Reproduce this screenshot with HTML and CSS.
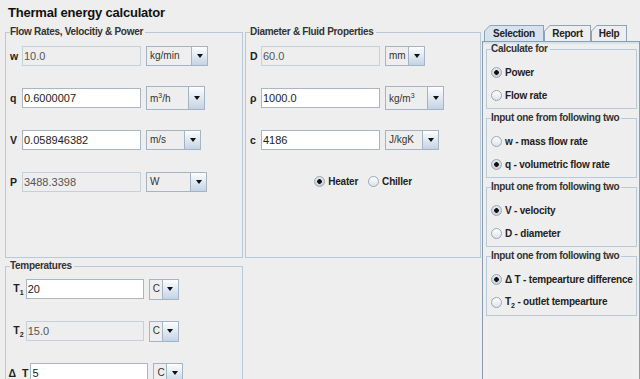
FILE: index.html
```html
<!DOCTYPE html>
<html lang="en">

<head>
  <meta charset="UTF-8">
  <meta name="viewport" content="width=device-width, initial-scale=1.0">
  <title>Thermal energy calculator</title>
  <link rel="stylesheet" href="styles.css">
</head>

<body>
  <h1 class="title">Thermal energy calculator</h1>
  <div class="main">
    <div class="forms">
      <fieldset class="panel panel-top">
        <legend>Flow Rates, Velocitiy &amp; Power</legend>
        <div class="rows">
          <div class="row">
            <span class="name">w</span>
            <input class="field" value="10.0" disabled>
            <div class="combo combo-kgmin"><span class="value">kg/min</span><span class="arrow"></span></div>
          </div>
          <div class="row">
            <span class="name">q</span>
            <input class="field" value="0.6000007">
            <div class="combo combo-tall combo-m3h"><span class="value">m<sup>3</sup>/h</span><span class="arrow"></span></div>
          </div>
          <div class="row">
            <span class="name">V</span>
            <input class="field" value="0.058946382">
            <div class="combo combo-ms"><span class="value">m/s</span><span class="arrow"></span></div>
          </div>
          <div class="row">
            <span class="name">P</span>
            <input class="field" value="3488.3398" disabled>
            <div class="combo combo-w"><span class="value">W</span><span class="arrow"></span></div>
          </div>
        </div>
      </fieldset>

      <fieldset class="panel panel-top panel-fluid">
        <legend>Diameter &amp; Fluid Properties</legend>
        <div class="rows">
          <div class="row">
            <span class="name">D</span>
            <input class="field" value="60.0" disabled>
            <div class="combo combo-mm"><span class="value">mm</span><span class="arrow"></span></div>
          </div>
          <div class="row">
            <span class="name">ρ</span>
            <input class="field" value="1000.0">
            <div class="combo combo-tall combo-kgm3"><span class="value">kg/m<sup>3</sup></span><span class="arrow"></span></div>
          </div>
          <div class="row">
            <span class="name">c</span>
            <input class="field" value="4186">
            <div class="combo combo-jkgk"><span class="value">J/kgK</span><span class="arrow"></span></div>
          </div>
          <div class="row row-center">
            <label class="option"><input type="radio" name="mode" checked> Heater</label>
            <label class="option"><input type="radio" name="mode"> Chiller</label>
          </div>
        </div>
      </fieldset>

      <fieldset class="panel panel-temps">
        <legend>Temperatures</legend>
        <div class="rows temp-rows">
          <div class="row">
            <span class="name">T<sub>1</sub></span>
            <input class="field" value="20">
            <div class="combo combo-c"><span class="value">C</span><span class="arrow"></span></div>
          </div>
          <div class="row">
            <span class="name">T<sub>2</sub></span>
            <input class="field" value="15.0" disabled>
            <div class="combo combo-c"><span class="value">C</span><span class="arrow"></span></div>
          </div>
          <div class="row">
            <span class="name name-delta">Δ T</span>
            <input class="field" value="5">
            <div class="combo combo-c"><span class="value">C</span><span class="arrow"></span></div>
          </div>
        </div>
      </fieldset>
    </div>

    <div class="tabpane">
      <div class="tabs">
        <div class="tab tab-active"><span>Selection</span></div>
        <div class="tab tab-report"><span>Report</span></div>
        <div class="tab tab-help"><span>Help</span></div>
      </div>
      <div class="tab-body">
        <fieldset class="group">
          <legend>Calculate for</legend>
          <label class="option"><input type="radio" name="calc" checked> Power</label>
          <label class="option"><input type="radio" name="calc"> Flow rate</label>
        </fieldset>
        <fieldset class="group">
          <legend>Input one from following two</legend>
          <label class="option"><input type="radio" name="flow"> w - mass flow rate</label>
          <label class="option"><input type="radio" name="flow" checked> q - volumetric flow rate</label>
        </fieldset>
        <fieldset class="group">
          <legend>Input one from following two</legend>
          <label class="option"><input type="radio" name="size" checked> V - velocity</label>
          <label class="option"><input type="radio" name="size"> D - diameter</label>
        </fieldset>
        <fieldset class="group">
          <legend>Input one from following two</legend>
          <label class="option"><input type="radio" name="temp" checked> Δ T - tempearture difference</label>
          <label class="option"><input type="radio" name="temp"> <span>T<sub>2</sub> - outlet tempearture</span></label>
        </fieldset>
      </div>
    </div>
  </div>
</body>

</html>
```

FILE: styles.css
```css
* {
  box-sizing: border-box;
}

body {
  margin: 0;
  height: 379px;
  overflow: hidden;
  background: #eeeeee;
  font-family: "Liberation Sans", Arial, sans-serif;
  color: #333;
}

.title {
  margin: 0;
  height: 25px;
  padding: 5px 0 0 8px;
  font-size: 13px;
  line-height: 16px;
  letter-spacing: -0.2px;
  color: #111;
}

.main {
  display: flex;
  align-items: flex-start;
}

.forms {
  display: grid;
  grid-template-columns: 238px 236px;
  column-gap: 2px;
  row-gap: 2px;
  width: 476px;
  margin: 1px 0 0 5px;
}

/* titled panels */

.panel,
.group {
  min-width: 0;
  margin: 0;
  padding: 0 4px;
  border: 1px solid #b8c9da;
}

.panel legend,
.group legend {
  padding: 0 2px 0 0;
  font-size: 10px;
  font-weight: bold;
  line-height: 12px;
  letter-spacing: -0.3px;
  color: #333;
}

.panel-top {
  padding-bottom: 58px;
}

.panel-temps {
  height: 160px;
}

.rows {
  display: flex;
  flex-direction: column;
  gap: 7px;
}

.row {
  display: flex;
  align-items: center;
  height: 35px;
}

.row-center {
  justify-content: center;
  gap: 10px;
}

.name {
  flex: none;
  width: 12px;
  font-size: 10.5px;
  font-weight: bold;
  white-space: nowrap;
  color: #222;
}

.panel-fluid .name {
  width: 11px;
}

.temp-rows {
  gap: 8px;
}

.temp-rows .row {
  width: 172px;
  height: 34px;
  justify-content: center;
}

.temp-rows .name {
  width: auto;
  margin-right: 2px;
}

.name-delta {
  word-spacing: 3px;
}

sub {
  font-size: 7px;
  vertical-align: sub;
}

sup {
  font-size: 7px;
  line-height: 0;
  vertical-align: 4px;
}

/* text fields */

.field {
  flex: none;
  width: 119px;
  height: 20px;
  margin: 0;
  padding: 0 1px;
  border: 1px solid #a9b6c4;
  background: #ffffff;
  font-family: "Liberation Sans", Arial, sans-serif;
  font-size: 11px;
  color: #222;
  outline: none;
}

.temp-rows .field {
  width: 118px;
}

.field:disabled {
  border-color: #c6d0da;
  background: #eeeeee;
  color: #555;
}

/* combo boxes */

.combo {
  flex: none;
  display: flex;
  align-items: center;
  height: 20px;
  margin-left: 5px;
  border: 1px solid #a4b4c5;
  background: #eeeeee;
  font-size: 10px;
  color: #333;
}

.combo .value {
  flex: 1;
  padding-left: 3px;
  line-height: 12px;
  white-space: nowrap;
}

.combo .arrow {
  display: flex;
  align-self: stretch;
  align-items: center;
  justify-content: center;
  width: 16px;
  border-left: 1px solid #a4b4c5;
  background: linear-gradient(#fdfeff, #c3d3e4);
}

.combo .arrow::after {
  content: '';
  border-left: 3.5px solid transparent;
  border-right: 3.5px solid transparent;
  border-top: 4px solid #111;
}

.combo-tall {
  height: 24px;
}

.combo-tall .value {
  padding-top: 2px;
}

.combo-kgmin {
  width: 62px;
}

.combo-m3h {
  width: 59px;
}

.combo-ms {
  width: 55px;
}

.combo-w {
  width: 61px;
}

.combo-mm {
  width: 40px;
}

.combo-kgm3 {
  width: 59px;
}

.combo-jkgk {
  width: 54px;
}

.combo-c {
  width: 30px;
  height: 21px;
}

/* radio buttons */

.option {
  display: flex;
  align-items: center;
  gap: 3px;
  font-size: 10px;
  font-weight: bold;
  letter-spacing: -0.2px;
  white-space: nowrap;
  color: #222;
}

.option sub {
  letter-spacing: 0;
}

.option input {
  flex: none;
  appearance: none;
  width: 11px;
  height: 11px;
  margin: 0;
  border: 1px solid #9aa6b3;
  border-radius: 50%;
  background: linear-gradient(#ffffff, #dce3ea);
}

.option input:checked {
  background: radial-gradient(circle, #111 0 2px, transparent 2.6px), linear-gradient(#e4e8ec, #c9d1d9);
}

/* tabbed pane */

.tabpane {
  width: 158px;
  margin-left: 1px;
}

.tabs {
  display: flex;
  height: 16px;
  padding-left: 2px;
}

.tab {
  width: 60px;
  height: 16px;
  padding: 1px 1px 0;
  background: #8fa3b8;
  clip-path: polygon(0 6px, 6px 0, 100% 0, 100% 100%, 0 100%);
}

.tab span {
  display: block;
  height: 15px;
  background: #eeeeee;
  clip-path: polygon(0 5px, 5px 0, 100% 0, 100% 100%, 0 100%);
  font-size: 10px;
  font-weight: bold;
  line-height: 16px;
  letter-spacing: -0.3px;
  text-align: center;
  color: #222;
}

.tab-active span {
  background: #d6e2ee;
}

.tab-report {
  width: 47px;
}

.tab-help {
  width: 36px;
}

.tab-body {
  height: 338px;
  padding: 1px 2px 0 3px;
  border: 1px solid #8a9cb0;
  border-bottom: none;
  box-shadow: inset 0 2px 0 #d6e2ee;
}

.group {
  padding: 6px 0 1px 4px;
}

.group + .group {
  margin-top: 3px;
}

.group .option {
  height: 23px;
}
```
